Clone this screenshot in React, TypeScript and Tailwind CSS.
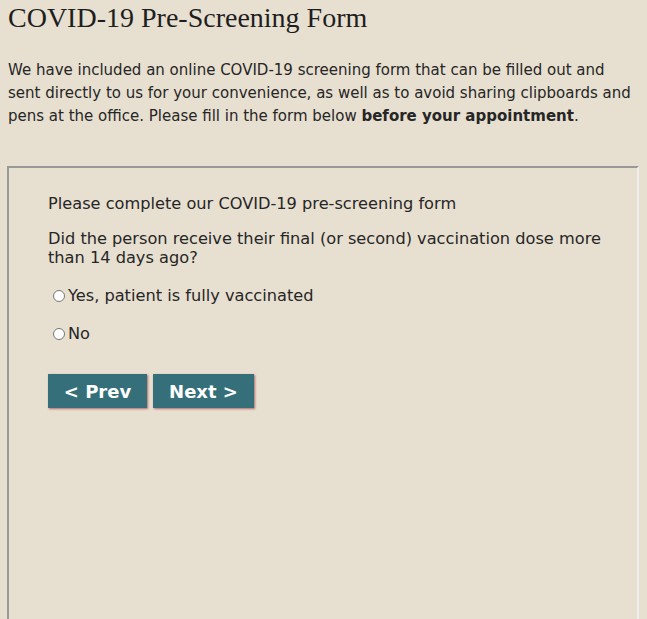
export default function App() {
  return (
    <div className="min-h-[619px] bg-[#e7dfd0] text-[#222] overflow-hidden" style={{ fontFamily: '"DejaVu Sans", sans-serif' }}>
      <h1 className="pl-2 pt-[2px] text-[28px] leading-[32px] text-[#1e1e1e]" style={{ fontFamily: '"Liberation Serif", serif' }}>
        COVID-19 Pre-Screening Form
      </h1>
      <p className="pl-2 pr-2 mt-[25px] text-[15px] leading-[23px] text-[#262626]">
        We have included an online COVID-19 screening form that can be filled out and sent directly to us for your convenience, as well as to avoid sharing clipboards and pens at the office. Please fill in the form below <b>before your appointment</b>.
      </p>
      <div className="ml-[7px] mt-[38px] w-[632px] h-[460px] border-2 border-t-[#999] border-l-[#999] border-r-[#eee] border-b-[#eee] pl-[39px] pt-[26px]">
        <p className="text-[16.2px] leading-[19px] text-[#262626]">Please complete our COVID-19 pre-screening form</p>
        <p className="mt-[16px] text-[16.2px] leading-[19px] text-[#262626]">
          Did the person receive their final (or second) vaccination dose more than 14 days ago?
        </p>
        <label className="mt-[19px] flex items-center text-[16.2px] leading-[19px] text-[#262626]">
          <span className="ml-[5px] w-[12px] h-[12px] rounded-full border border-[#777] bg-white mr-[3px]" />
          Yes, patient is fully vaccinated
        </label>
        <label className="mt-[19px] flex items-center text-[16.2px] leading-[19px] text-[#262626]">
          <span className="ml-[5px] w-[12px] h-[12px] rounded-full border border-[#777] bg-white mr-[3px]" />
          No
        </label>
        <div className="mt-[31px] flex gap-[6px]">
          <button className="w-[99px] h-[34px] bg-[#35707a] text-white font-bold text-[18px] shadow-[1px_1px_2px_#b06a6a]">&lt; Prev</button>
          <button className="w-[101px] h-[34px] bg-[#35707a] text-white font-bold text-[18px] shadow-[1px_1px_2px_#b06a6a]">Next &gt;</button>
        </div>
      </div>
    </div>
  );
}
